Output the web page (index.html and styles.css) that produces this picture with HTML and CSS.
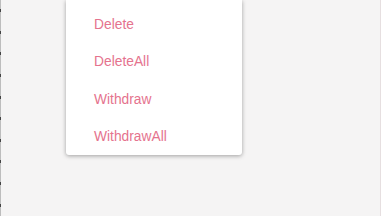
FILE: index.html
```html
<!DOCTYPE html>
<html lang="en">
<head>
    <meta charset="UTF-8">
    <title>Menu</title>
    <link rel="stylesheet" href="styles.css">
</head>
<body>
    <div class="frame">
        <div class="ruler">
            <span></span><span></span><span></span><span></span><span></span>
            <span></span><span></span><span></span><span></span><span></span>
        </div>
        <div class="stage">
            <div class="menu">
                <div class="menu-item">Delete</div>
                <div class="menu-item">DeleteAll</div>
                <div class="menu-item">Withdraw</div>
                <div class="menu-item">WithdrawAll</div>
            </div>
        </div>
        <div class="edge"></div>
    </div>
</body>
</html>
```

FILE: styles.css
```css
html, body {
    margin: 0;
    height: 100%;
}
body {
    font-family: 'Liberation Sans', Arial, sans-serif;
    background-color: #fff;
}
.frame {
    display: flex;
    height: 216px;
}
.ruler {
    width: 1px;
    background-color: #bdbdbd;
    display: flex;
    flex-direction: column;
    justify-content: space-around;
}
.ruler span {
    width: 1px;
    height: 3px;
    background-color: #444;
}
.stage {
    flex: 1;
    background-color: #f5f4f4;
}
.edge {
    width: 3px;
    border-left: 1px solid #e6dfe0;
    background-color: #fff;
}
.menu {
    margin-left: 65px;
    width: 176px;
    height: 155px;
    box-sizing: border-box;
    padding-top: 6px;
    background-color: #fff;
    border-radius: 0 0 3px 3px;
    box-shadow: 0 1px 4px rgba(0, 0, 0, 0.35);
}
.menu-item {
    height: 37.3px;
    display: flex;
    align-items: center;
    padding-left: 28px;
    font-size: 13.8px;
    color: #e5738e;
}
```
